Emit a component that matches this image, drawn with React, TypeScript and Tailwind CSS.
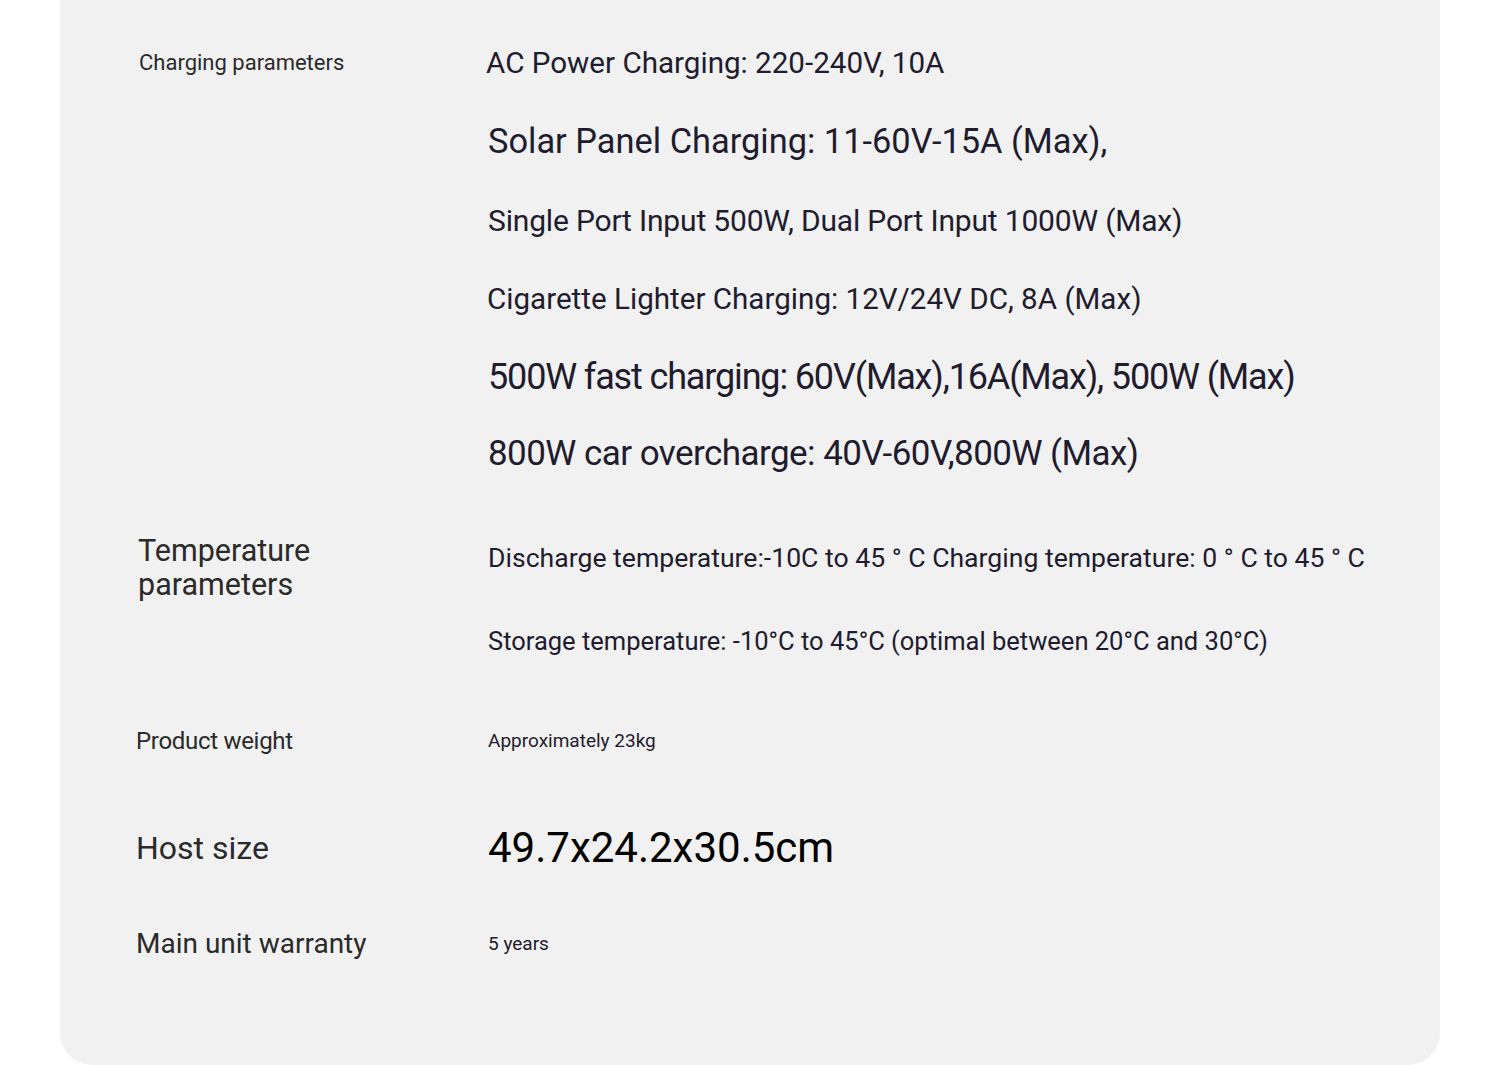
const label = "text-[#2a2a2a] font-['Roboto',sans-serif]";
const value = "text-[#211b2e] font-['Roboto',sans-serif] whitespace-nowrap";

export default function App() {
  return (
    <div className="min-h-[1065px] bg-white">
      <div className="mx-[60px] h-[1065px] rounded-b-[32px] bg-[#f1f1f1] pl-[76px] pt-[24px]">
        {/* Charging */}
        <div className="grid grid-cols-[352px_1fr]">
          <div className={`${label} text-[22px] leading-[78px] pl-[3px]`}>Charging parameters</div>
          <div className="flex flex-col">
            <div className={`${value} text-[29.6px] leading-[78px] -ml-[2px]`}>AC Power Charging: 220-240V, 10A</div>
            <div className={`${value} text-[34.4px] leading-[79px]`}>Solar Panel Charging: 11-60V-15A (Max),</div>
            <div className={`${value} text-[30px] leading-[79px] tracking-[-0.18px]`}>Single Port Input 500W, Dual Port Input 1000W (Max)</div>
            <div className={`${value} text-[29.6px] leading-[78px] -ml-[1px]`}>Cigarette Lighter Charging: 12V/24V DC, 8A (Max)</div>
            <div className={`${value} text-[36px] leading-[78px] tracking-[-1.15px]`}>500W fast charging: 60V(Max),16A(Max), 500W (Max)</div>
            <div className={`${value} text-[35px] leading-[76px] tracking-[-0.55px]`}>800W car overcharge: 40V-60V,800W (Max)</div>
          </div>
        </div>

        {/* Temperature */}
        <div className="mt-[42px] grid grid-cols-[352px_1fr]">
          <div className={`${label} text-[30.5px] leading-[34px] pl-[2px]`}>
            Temperature
            <br />
            parameters
          </div>
          <div className="flex flex-col gap-[43px] pt-[4px]">
            <div className={`${value} text-[26.6px] leading-[40px]`}>
              Discharge temperature:-10C to 45 ° C Charging temperature: 0 ° C to 45 ° C
            </div>
            <div className={`${value} text-[25.5px] leading-[40px]`}>
              Storage temperature: -10°C to 45°C (optimal between 20°C and 30°C)
            </div>
          </div>
        </div>

        {/* Weight */}
        <div className="mt-[60px] grid grid-cols-[352px_1fr]">
          <div className={`${label} text-[24px] leading-[40px] tracking-[-0.3px]`}>Product weight</div>
          <div className={`${value} text-[19px] leading-[40px]`}>Approximately 23kg</div>
        </div>

        {/* Size */}
        <div className="mt-[62px] grid grid-cols-[352px_1fr]">
          <div className={`${label} text-[32px] leading-[50px]`}>Host size</div>
          <div className={`${value} text-[42px] leading-[50px] text-black`}>49.7x24.2x30.5cm</div>
        </div>

        {/* Warranty */}
        <div className="mt-[51px] grid grid-cols-[352px_1fr]">
          <div className={`${label} text-[28px] leading-[40px]`}>Main unit warranty</div>
          <div className={`${value} text-[19px] leading-[40px]`}>5 years</div>
        </div>
      </div>
    </div>
  );
}
